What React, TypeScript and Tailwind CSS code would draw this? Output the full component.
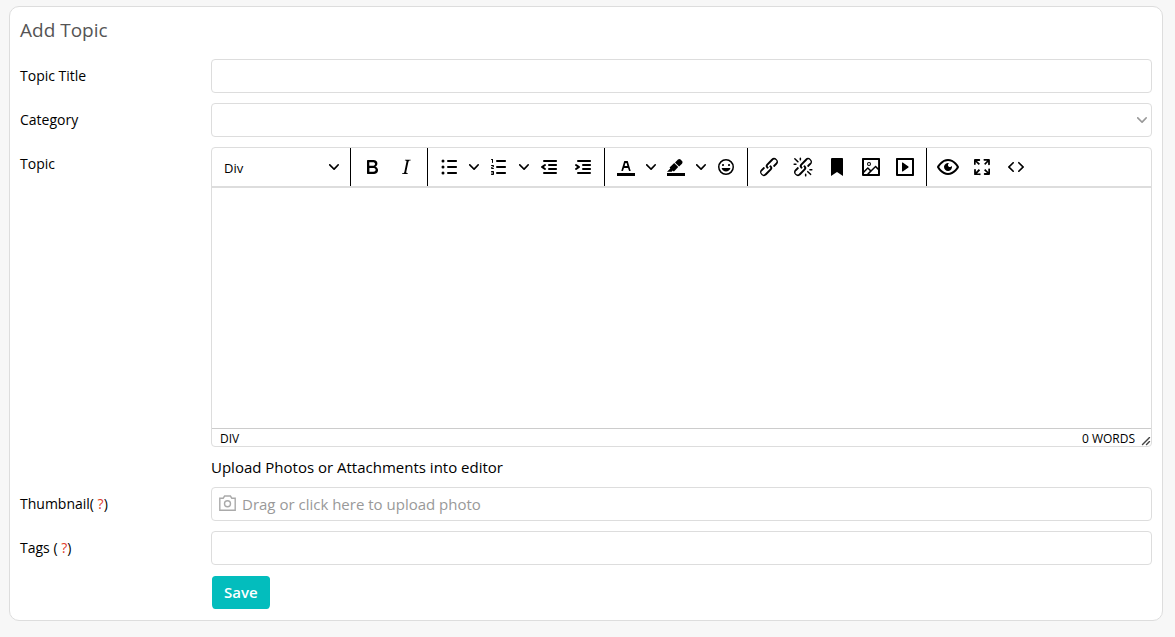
import type { ReactNode } from 'react';

const icons = {
  bold: 'M7.8 19c-.3 0-.5 0-.6-.2l-.2-.5V5.7c0-.2 0-.4.2-.5l.6-.2h5c1.5 0 2.7.3 3.5 1 .7.6 1.1 1.4 1.1 2.5a3 3 0 01-.6 1.9c-.4.6-1 1-1.6 1.2.4.1.9.3 1.3.6s.8.7 1 1.2c.4.4.5 1 .5 1.6 0 1.3-.4 2.3-1.3 3-.8.7-2.1 1-3.8 1H7.8zm5-8.3c.6 0 1.2-.1 1.6-.5.4-.3.6-.7.6-1.3 0-1.1-.8-1.7-2.3-1.7H9.3v3.5h3.4zm.5 6c.7 0 1.3-.1 1.7-.4.4-.4.6-.9.6-1.5s-.2-1-.7-1.4c-.4-.3-1-.4-2-.4H9.4v3.8h4z',
  italic:
    'M16.7 4.7l-.1.9h-.3c-.6 0-1 0-1.4.3-.3.3-.4.6-.5 1.1l-2.1 9.8v.6c0 .5.4.8 1.4.8h.2l-.2.8H8l.2-.8h.2c1.1 0 1.8-.5 2-1.5l2-9.8.1-.5c0-.6-.4-.8-1.4-.8h-.3l.2-.9h5.8z',
  bulletList:
    'M11 5h8c.6 0 1 .4 1 1s-.4 1-1 1h-8a1 1 0 010-2zm0 6h8c.6 0 1 .4 1 1s-.4 1-1 1h-8a1 1 0 010-2zm0 6h8c.6 0 1 .4 1 1s-.4 1-1 1h-8a1 1 0 010-2zM4.5 6a1.5 1.5 0 103 0 1.5 1.5 0 10-3 0zm0 6a1.5 1.5 0 103 0 1.5 1.5 0 10-3 0zm0 6a1.5 1.5 0 103 0 1.5 1.5 0 10-3 0z',
  numberList:
    'M10 17h8c.6 0 1 .4 1 1s-.4 1-1 1h-8a1 1 0 010-2zm0-6h8c.6 0 1 .4 1 1s-.4 1-1 1h-8a1 1 0 010-2zm0-6h8c.6 0 1 .4 1 1s-.4 1-1 1h-8a1 1 0 110-2zM6 4v3.5c0 .3-.2.5-.5.5a.5.5 0 01-.5-.5V5h-.5a.5.5 0 010-1H6zm-1 8.8l.2.2h1.3c.3 0 .5.2.5.5s-.2.5-.5.5H4.9a1 1 0 01-.9-1V13c0-.4.3-.8.6-1l1.2-.4.2-.3a.2.2 0 00-.2-.2H4.5a.5.5 0 01-.5-.5c0-.3.2-.5.5-.5h1.6c.5 0 .9.4.9 1v.1c0 .4-.3.8-.6 1l-1.2.4-.2.3zM7 17v2c0 .6-.4 1-1 1H4.5a.5.5 0 010-1h1.2c.2 0 .3-.1.3-.3 0-.2-.1-.3-.3-.3H4.4a.4.4 0 110-.8h1.3c.2 0 .3-.1.3-.3 0-.2-.1-.3-.3-.3H4.5a.5.5 0 110-1H6c.6 0 1 .4 1 1z',
  outdent:
    'M7 5h12c.6 0 1 .4 1 1s-.4 1-1 1H7a1 1 0 110-2zm5 4h7c.6 0 1 .4 1 1s-.4 1-1 1h-7a1 1 0 010-2zm0 4h7c.6 0 1 .4 1 1s-.4 1-1 1h-7a1 1 0 010-2zm-5 4h12a1 1 0 010 2H7a1 1 0 010-2zm1.6-3.8a1 1 0 01-1.2 1.6l-3-2a1 1 0 010-1.6l3-2a1 1 0 011.2 1.6L6.8 12l1.8 1.2z',
  indent:
    'M7 5h12c.6 0 1 .4 1 1s-.4 1-1 1H7a1 1 0 110-2zm5 4h7c.6 0 1 .4 1 1s-.4 1-1 1h-7a1 1 0 010-2zm0 4h7c.6 0 1 .4 1 1s-.4 1-1 1h-7a1 1 0 010-2zm-5 4h12a1 1 0 010 2H7a1 1 0 010-2zm-2.6-3.8L6.2 12l-1.8-1.2a1 1 0 011.2-1.6l3 2a1 1 0 010 1.6l-3 2a1 1 0 11-1.2-1.6z',
  textColor:
    'M3 18h18v3H3zM8.7 16h-.8a.5.5 0 01-.5-.6l2.7-9c.1-.3.3-.4.5-.4h2.8c.2 0 .4.1.5.4l2.7 9a.5.5 0 01-.5.6h-.8a.5.5 0 01-.4-.4l-.7-2.2c0-.3-.3-.4-.5-.4h-3.4c-.2 0-.4.1-.5.4l-.7 2.2c0 .3-.2.4-.4.4zm2.6-7.6l-.6 2a.5.5 0 00.5.6h1.6a.5.5 0 00.5-.6l-.6-2c0-.3-.3-.4-.5-.4h-.4c-.2 0-.4.1-.5.4z',
  highlight:
    'M3 18h18v3H3zM7.7 16.7H3l3.3-3.3-.7-.8L10.2 8l4 4.1-4 4.2c-.2.2-.6.2-.8 0l-.6-.7-1.1 1.1zm5-7.5L11 7.4l3-2.9a2 2 0 012.6 0L18 6c.7.7.7 2 0 2.7l-2.9 2.9-1.8-1.8-.5-.6',
  emoji:
    'M9 11c.6 0 1-.4 1-1s-.4-1-1-1a1 1 0 00-1 1c0 .6.4 1 1 1zm6 0c.6 0 1-.4 1-1s-.4-1-1-1a1 1 0 00-1 1c0 .6.4 1 1 1zm-3 5.5c2.1 0 4-1.5 4.4-3.5H7.6c.5 2 2.3 3.5 4.4 3.5zM12 4a8 8 0 100 16 8 8 0 000-16zm0 14.5a6.5 6.5 0 110-13 6.5 6.5 0 010 13z',
  link: 'M6.2 12.3a1 1 0 011.4 1.4l-2.1 2a2 2 0 102.7 2.8l4.8-4.8a1 1 0 000-1.4 1 1 0 111.4-1.3 2.9 2.9 0 010 4L9.6 20a3.9 3.9 0 01-5.5-5.5l2-2zm11.6-.6a1 1 0 01-1.4-1.4l2-2a2 2 0 10-2.6-2.8L11 10.3a1 1 0 000 1.4A1 1 0 119.6 13a2.9 2.9 0 010-4L14.4 4a3.9 3.9 0 015.5 5.5l-2 2z',
  unlink:
    'M6.2 12.3a1 1 0 011.4 1.4l-2 2a2 2 0 102.6 2.8l4.8-4.8a1 1 0 000-1.4 1 1 0 111.4-1.3 2.9 2.9 0 010 4L9.6 20a3.9 3.9 0 01-5.5-5.5l2-2zm11.6-.6a1 1 0 01-1.4-1.4l2.1-2a2 2 0 10-2.7-2.8L11 10.3a1 1 0 000 1.4A1 1 0 119.6 13a2.9 2.9 0 010-4L14.4 4a3.9 3.9 0 015.5 5.5l-2 2zM7.6 6.3a.8.8 0 01-1 1.1L3.3 4.2a.7.7 0 111-1l3.2 3.1zM5.1 8.6a.8.8 0 010 1.5H3a.8.8 0 010-1.5H5zm5-3.5a.8.8 0 01-1.5 0V3a.8.8 0 011.5 0V5zm6 11.8a.8.8 0 011-1l3.2 3.2a.8.8 0 01-1 1L16 17zm-2.2 2a.8.8 0 011.5 0V21a.8.8 0 01-1.5 0V19zm5-3.5a.7.7 0 110-1.5H21a.8.8 0 010 1.5H19z',
  bookmark: 'M6 4v17l6-4 6 4V4c0-.6-.4-1-1-1H7a1 1 0 00-1 1z',
  image:
    'M5 15.7l3.3-3.2c.3-.3.7-.3 1 0L12 15l4.1-4c.3-.4.8-.4 1 0l2 1.9V5H5v10.7zM5 18V19h3l2.8-2.9-2-2L5 17.9zm14-3l-2.5-2.4-6.4 6.5H19v-4zM4 3h16c.6 0 1 .4 1 1v16c0 .6-.4 1-1 1H4a1 1 0 01-1-1V4c0-.6.4-1 1-1zm6 8a2 2 0 100-4 2 2 0 000 4zm0-1a1 1 0 110-2 1 1 0 010 2z',
  media:
    'M4 3h16c.6 0 1 .4 1 1v16c0 .6-.4 1-1 1H4a1 1 0 01-1-1V4c0-.6.4-1 1-1zm1 2v14h14V5H5zm4.8 2.6l5.6 4a.5.5 0 010 .8l-5.6 4A.5.5 0 019 16V8a.5.5 0 01.8-.4z',
  preview:
    'M3.5 12.5c.5.8 1.1 1.6 1.8 2.3 2 2 4.2 3.2 6.7 3.2s4.7-1.2 6.7-3.2a16.2 16.2 0 002.1-2.8 15.7 15.7 0 00-2.1-2.8c-2-2-4.2-3.2-6.7-3.2a9.3 9.3 0 00-6.7 3.2A16.2 16.2 0 003.2 12c0 .2.2.3.3.5zm-2.4-1l.7-1.2L4 7.8C6.2 5.4 8.9 4 12 4c3 0 5.8 1.4 8.1 3.8a18.2 18.2 0 012.8 3.7v1l-.7 1.2-2.1 2.5c-2.3 2.4-5 3.8-8.1 3.8-3 0-5.8-1.4-8.1-3.8a18.2 18.2 0 01-2.8-3.7 1 1 0 010-1zm12-3.3a2 2 0 102.7 2.6 4 4 0 11-2.6-2.6z',
  fullscreen:
    'M15.3 10l-1.2-1.3 2.9-3h-2.3a.9.9 0 110-1.7H19c.5 0 .9.4.9.9v4.4a.9.9 0 11-1.8 0V7l-2.9 3zm0 4l3 3v-2.3a.9.9 0 111.7 0V19c0 .5-.4.9-.9.9h-4.4a.9.9 0 110-1.8H17l-3-2.9 1.3-1.2zM10 15.4l-2.9 3h2.3a.9.9 0 110 1.7H5a.9.9 0 01-.9-.9v-4.4a.9.9 0 111.8 0V17l2.9-3 1.2 1.3zM8.7 10L5.7 7v2.3a.9.9 0 01-1.7 0V5c0-.5.4-.9.9-.9h4.4a.9.9 0 010 1.8H7l3 2.9-1.3 1.2z',
  code: 'M9.8 15.7c.3.3.3.8 0 1-.3.4-.9.4-1.2 0l-4.4-4.1a.8.8 0 010-1.2l4.4-4.2c.3-.3.9-.3 1.2 0 .3.3.3.8 0 1.1L6 12l3.8 3.7zM14.2 15.7c-.3.3-.3.8 0 1 .4.4.9.4 1.2 0l4.4-4.1c.3-.3.3-.8 0-1.2l-4.4-4.2a.8.8 0 00-1.2 0c-.3.3-.3.8 0 1.1L18 12l-3.8 3.7z',
};

type IconName = keyof typeof icons;
type Tool = { icon: IconName; label: string; menu?: boolean };

const toolGroups: Tool[][] = [
  [
    { icon: 'bold', label: 'Bold' },
    { icon: 'italic', label: 'Italic' },
  ],
  [
    { icon: 'bulletList', label: 'Bullet list', menu: true },
    { icon: 'numberList', label: 'Numbered list', menu: true },
    { icon: 'outdent', label: 'Decrease indent' },
    { icon: 'indent', label: 'Increase indent' },
  ],
  [
    { icon: 'textColor', label: 'Text color', menu: true },
    { icon: 'highlight', label: 'Background color', menu: true },
    { icon: 'emoji', label: 'Emoticons' },
  ],
  [
    { icon: 'link', label: 'Insert link' },
    { icon: 'unlink', label: 'Remove link' },
    { icon: 'bookmark', label: 'Anchor' },
    { icon: 'image', label: 'Insert image' },
    { icon: 'media', label: 'Insert media' },
  ],
  [
    { icon: 'preview', label: 'Preview' },
    { icon: 'fullscreen', label: 'Fullscreen' },
    { icon: 'code', label: 'Source code' },
  ],
];

function Chevron() {
  return (
    <svg width="10" height="10" viewBox="0 0 10 10" aria-hidden="true">
      <path d="M8.7 2.2c.3-.3.8-.3 1 0 .4.4.4.9 0 1.2L5.7 7.8c-.3.3-.9.3-1.2 0L.2 3.4a.8.8 0 010-1.2c.3-.3.8-.3 1.1 0L5 6l3.7-3.8z" />
    </svg>
  );
}

function ToolButton({ icon, label, menu }: Tool) {
  return (
    <div className="flex">
      <button
        type="button"
        aria-label={label}
        className="flex h-[34px] w-[34px] items-center justify-center rounded-sm hover:bg-gray-200"
      >
        <svg width="24" height="24" viewBox="0 0 24 24" aria-hidden="true">
          <path fillRule={icon === 'image' ? 'nonzero' : 'evenodd'} d={icons[icon]} />
        </svg>
      </button>
      {menu && (
        <button
          type="button"
          aria-label={`${label} options`}
          className="flex h-[34px] w-4 items-center justify-center rounded-sm hover:bg-gray-200"
        >
          <Chevron />
        </button>
      )}
    </div>
  );
}

function Editor() {
  return (
    <div className="flex h-[300px] flex-col overflow-hidden rounded border border-[#ddd]">
      <div className="flex border-b-2 border-[#ddd]">
        <div className="px-1">
          <div className="relative">
            <select
              aria-label="Blocks"
              className="h-[38px] w-[130px] appearance-none bg-white pt-1 pl-2 text-[13px] outline-none"
            >
              <option>Div</option>
              <option>Paragraph</option>
            </select>
            <span className="pointer-events-none absolute inset-y-0 right-[7px] flex items-center">
              <Chevron />
            </span>
          </div>
        </div>
        {toolGroups.map((group) => (
          <div key={group[0].icon} className="flex items-center border-l border-black px-1">
            {group.map((tool) => (
              <ToolButton key={tool.icon} {...tool} />
            ))}
          </div>
        ))}
      </div>
      <textarea id="topic" className="block w-full grow resize-none p-3 text-sm outline-none" />
      <div className="flex h-[18px] border-t border-[#ccc] pl-2 text-xs leading-[19px] uppercase">
        <span className="grow">div</span>
        <span>0 words</span>
        <svg width="10" height="10" viewBox="0 0 10 10" className="ml-1.5 self-end fill-[#444]" aria-hidden="true">
          <path d="M8.1 1.1A.5.5 0 119 2l-7 7A.5.5 0 111 8l7-7zM8.1 5.1A.5.5 0 119 6l-3 3A.5.5 0 115 8l3-3z" />
        </svg>
      </div>
    </div>
  );
}

function Row({ id, label, children }: { id: string; label: ReactNode; children: ReactNode }) {
  return (
    <div className="flex">
      <label htmlFor={id} className="h-[34px] w-[191px] shrink-0 text-sm leading-[33px] font-medium">
        {label}
      </label>
      <div className="min-w-0 grow">{children}</div>
    </div>
  );
}

function Hint({ title }: { title: string }) {
  return (
    <a href="#" title={title} className="text-[#e03a2a]">
      ?
    </a>
  );
}

const fieldClass =
  'block h-[34px] w-full rounded border border-[#ddd] bg-white px-2 text-[15px] outline-none focus:border-[#03bdbd]';

export default function App() {
  return (
    <div className="min-h-screen bg-[#f7f7f7] pt-1.5 pr-3 pb-4 pl-[9px] font-['Open_Sans',sans-serif] text-black">
      <form className="rounded-[10px] border border-[#ddd] bg-white px-2.5 pb-[11px]">
        <h1 className="pt-[7px] pb-[13px] text-[19px] leading-8 text-[#555]">Add Topic</h1>
        <div className="space-y-2.5">
          <Row id="title" label="Topic Title">
            <input id="title" type="text" className={fieldClass} />
          </Row>
          <Row id="category" label="Category">
            <div className="relative">
              <select id="category" className={`${fieldClass} appearance-none`}>
                <option></option>
                <option>General</option>
              </select>
              <span className="pointer-events-none absolute inset-y-0 right-[5px] flex items-center fill-[#999]">
                <Chevron />
              </span>
            </div>
          </Row>
          <div>
            <Row id="topic" label="Topic">
              <Editor />
              <p className="text-[15px] leading-10">Upload Photos or Attachments into editor</p>
            </Row>
            <Row
              id="thumbnail"
              label={
                <>
                  Thumbnail( <Hint title="Shown in the topic list" />)
                </>
              }
            >
              <label
                htmlFor="thumbnail"
                className="flex h-[34px] cursor-pointer items-center gap-1.5 rounded border border-[#ddd] px-[7px] text-[15px] text-[#999]"
              >
                <svg
                  width="17"
                  height="18"
                  viewBox="0 0 17 18"
                  fill="none"
                  stroke="#aaa"
                  strokeWidth="1.4"
                  aria-hidden="true"
                >
                  <path d="M.8 3.2h3.4L5.6 1h5.8l1.4 2.2h3.4v12H.8z" />
                  <circle cx="8.5" cy="8.8" r="3" />
                </svg>
                Drag or click here to upload photo
                <input id="thumbnail" type="file" accept="image/*" className="sr-only" />
              </label>
            </Row>
          </div>
          <Row
            id="tags"
            label={
              <>
                Tags ( <Hint title="Separate tags with commas" />)
              </>
            }
          >
            <input id="tags" type="text" className={fieldClass} />
          </Row>
          <div className="pl-[191px]">
            <button
              type="submit"
              className="h-[34px] rounded-sm border border-b-0 border-white bg-[#03bdbd] bg-clip-padding px-3 text-[15px] font-semibold text-white"
            >
              Save
            </button>
          </div>
        </div>
      </form>
    </div>
  );
}
